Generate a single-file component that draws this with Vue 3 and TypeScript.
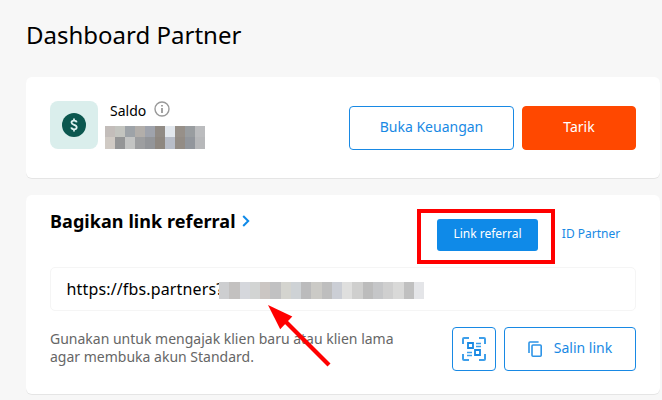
<script setup lang="ts">
const balanceMosaic: string[] = [
  '#c3bdba', '#c3c4bf', '#9ea3a8', '#b2aeaa', '#9fa3ac', '#918b85', '#e2e7ed', '#979089', '#999da0', '#bbbcbe',
  '#d0cac4', '#949596', '#c3c4c3', '#9d9ea0', '#939599', '#8e8780', '#b8bdc8', '#938c85', '#92969c', '#b7b8ba',
]

const linkMosaic: string[] = [
  '#cdced0', '#c3c1c0', '#d5d7dc', '#d2d4d3', '#cbc6c3', '#c1c1c2', '#d4d4cf',
  '#ced2d5', '#bbbbbc', '#cbcac6', '#bebebe', '#cbced5', '#dfdfde', '#cfcfce',
  '#bcbcbc', '#c5c6c8', '#cfcfcf', '#d9d9d8', '#c0c0c0', '#e4e5e8',
]
</script>

<template>
  <main class="page">
    <h1 class="title">Dashboard Partner</h1>

    <section class="card balance">
      <div class="wallet">
        <svg width="24" height="24" viewBox="0 0 24 24">
          <circle cx="12" cy="12" r="12" fill="#0b574f" />
          <path d="M14.6 9.3C14.4 8.2 13.5 7.7 12 7.7C10.5 7.7 9.5 8.4 9.5 9.6C9.5 12.5 14.7 11.1 14.7 14.2C14.7 15.6 13.6 16.3 12 16.3C10.4 16.3 9.5 15.6 9.3 14.4M12 5.6V7.8M12 16.2V18.5" fill="none" stroke="#dff4f1" stroke-width="1.8" />
        </svg>
      </div>
      <div class="balance-info">
        <div class="balance-label">
          <span class="saldo">Saldo</span>
          <svg width="16" height="16" viewBox="0 0 16 16">
            <circle cx="8" cy="8" r="7" fill="none" stroke="#999" stroke-width="1.4" />
            <path d="M8 4V5.6M8 7V12" stroke="#999" stroke-width="1.8" />
          </svg>
        </div>
        <div class="mosaic">
          <i v-for="(color, index) in balanceMosaic" :key="index" :style="{ background: color }"></i>
        </div>
      </div>
      <div class="actions">
        <button class="button finance">Buka Keuangan</button>
        <button class="button withdraw">Tarik</button>
      </div>
    </section>

    <section class="card referral">
      <header class="referral-head">
        <h2>Bagikan link referral</h2>
        <svg class="chevron" width="8" height="12" viewBox="0 0 8 12">
          <path d="M1.2 1L6.2 6L1.2 11" fill="none" stroke="#0f8ae8" stroke-width="2" />
        </svg>
        <div class="tabs">
          <button class="tab active">Link referral</button>
          <button class="tab">ID Partner</button>
        </div>
      </header>
      <div class="link-field">
        <span class="url">https://fbs.partners?</span>
        <div class="link-mosaic">
          <i v-for="(color, index) in linkMosaic" :key="index" :style="{ background: color }"></i>
        </div>
      </div>
      <footer class="referral-foot">
        <p>Gunakan untuk mengajak klien baru atau klien lama<br />agar membuka akun Standard.</p>
        <button class="button qr" aria-label="QR">
          <svg width="24" height="24" viewBox="0 0 24 24" fill="none" stroke="#3e9fea" stroke-width="2">
            <path d="M1 7V2Q1 1 2 1H7M17 1H22Q23 1 23 2V7M23 17V22Q23 23 22 23H17M7 23H2Q1 23 1 22V17" />
            <path d="M14 6.5H19M14 9.5H19M5 15.5H10M5 18.5H10" stroke-width="1.5" />
            <path d="M6 6H11V11H6ZM13 13H18V18H13Z" stroke="#1889e4" stroke-width="1.8" />
          </svg>
        </button>
        <button class="button copy">
          <svg width="14" height="16" viewBox="0 0 14 16" fill="none" stroke="#2d94e7" stroke-width="1.6">
            <path d="M1 12V2Q1 1 2 1H10.6" />
            <rect x="4" y="4" width="9.2" height="11.2" rx="1" />
          </svg>
          <span>Salin link</span>
        </button>
      </footer>
    </section>

    <div class="highlight"></div>
    <svg class="arrow" width="64" height="64" viewBox="0 0 64 64">
      <path d="M18 17L61 60" stroke="#f00" stroke-width="4.2" />
      <path d="M0 0L24.3 11.5L12.2 24.3Z" fill="#f00" />
    </svg>
  </main>
</template>

<style>
body {
  margin: 0;
  background: #f7f7f7;
  overflow: hidden;
}
</style>

<style scoped>
* {
  box-sizing: border-box;
}

.page {
  position: relative;
  width: 662px;
  height: 400px;
  padding: 0 2px 0 26px;
  overflow: hidden;
  background: #f7f7f7;
  color: #000;
  font-family: "Noto Sans", sans-serif;
  font-size: 14px;
}

svg {
  display: block;
  flex: none;
}

.title {
  height: 77px;
  margin: 0;
  padding-top: 18px;
  font-size: 24px;
  font-weight: 400;
  line-height: 33px;
  white-space: nowrap;
}

.card {
  border-radius: 6px;
  background: #fff;
  box-shadow: 0 1px 0 #e5e5e5;
}

.balance {
  display: flex;
  height: 101px;
  padding: 24px;
}

.wallet {
  display: flex;
  align-items: center;
  justify-content: center;
  width: 48px;
  height: 48px;
  border-radius: 8px;
  background: #daeeec;
}

.balance-info {
  margin-left: 7px;
}

.balance-label {
  display: flex;
  height: 25px;
  padding-left: 5px;
}

.saldo {
  width: 44px;
  line-height: 20px;
}

.mosaic {
  display: grid;
  grid-template-columns: repeat(10, 10px);
  grid-template-rows: 11px 12px;
}

.actions {
  display: flex;
  gap: 8px;
  margin: 5px 0 0 auto;
}

.button {
  display: flex;
  align-items: center;
  justify-content: center;
  height: 44px;
  padding: 0 0 4px;
  border: 1px solid #1889e4;
  border-radius: 4px;
  background: #fff;
  color: #1889e4;
  font: 14px "Noto Sans", sans-serif;
  white-space: nowrap;
}

.finance {
  width: 165px;
}

.withdraw {
  width: 114px;
  border-color: #ff4800;
  background: #ff4800;
  color: #fff;
}

.referral {
  height: 199px;
  margin-top: 17px;
  padding: 14px 24px 0;
}

.referral-head {
  display: flex;
  height: 58px;
}

h2 {
  margin: 0;
  font-size: 18px;
  font-weight: 700;
  letter-spacing: 0.07px;
  line-height: 25px;
  white-space: nowrap;
}

.chevron {
  margin: 6px 0 0 6px;
}

.tabs {
  display: flex;
  gap: 8px;
  margin: 10px 0 0 auto;
}

.tab {
  width: 90px;
  height: 32px;
  padding: 0 0 4px;
  border: 0;
  border-radius: 3px;
  background: transparent;
  color: #1889e4;
  font: 12px "Noto Sans", sans-serif;
  white-space: nowrap;
}

.tab.active {
  width: 101px;
  background: #0f8ae8;
  color: #fff;
}

.link-field {
  display: flex;
  align-items: center;
  height: 44px;
  padding-left: 15.5px;
  border: 1px solid #f5f5f5;
  border-radius: 5px;
}

.url {
  width: 152.5px;
  font-size: 16px;
  letter-spacing: 0.15px;
  white-space: nowrap;
}

.link-mosaic {
  z-index: 1;
  display: grid;
  grid-template-columns: repeat(20, 10.25px);
  height: 17px;
  margin-top: 3px;
}

.referral-foot {
  display: flex;
  gap: 8px;
  margin-top: 16px;
}

.referral-foot p {
  flex: 1;
  margin: 3px 0 0;
  color: #666;
  line-height: 18px;
  white-space: nowrap;
}

.qr {
  width: 44px;
  padding: 0;
}

.copy {
  gap: 12px;
  width: 132px;
}

.copy svg {
  margin-top: 4px;
}

.highlight {
  position: absolute;
  top: 209px;
  left: 417px;
  width: 138px;
  height: 55px;
  border: 4px solid #f00;
}

.arrow {
  position: absolute;
  z-index: 2;
  top: 305px;
  left: 268px;
}
</style>
